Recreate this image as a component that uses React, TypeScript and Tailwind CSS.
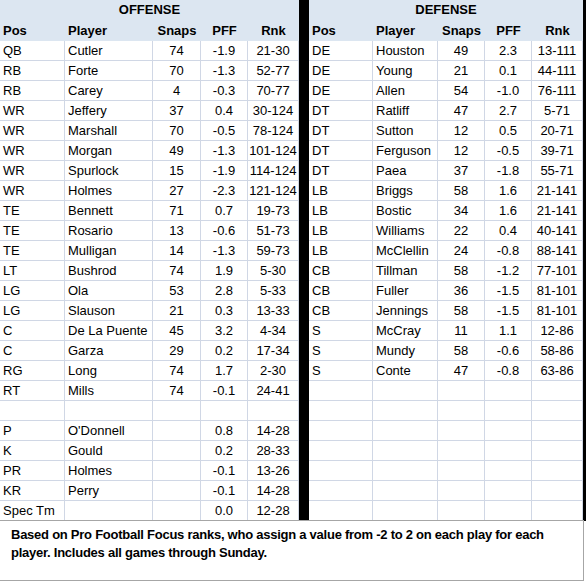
type Row = [string, string, string, string, string];

const offense: Row[] = [
  ["QB", "Cutler", "74", "-1.9", "21-30"],
  ["RB", "Forte", "70", "-1.3", "52-77"],
  ["RB", "Carey", "4", "-0.3", "70-77"],
  ["WR", "Jeffery", "37", "0.4", "30-124"],
  ["WR", "Marshall", "70", "-0.5", "78-124"],
  ["WR", "Morgan", "49", "-1.3", "101-124"],
  ["WR", "Spurlock", "15", "-1.9", "114-124"],
  ["WR", "Holmes", "27", "-2.3", "121-124"],
  ["TE", "Bennett", "71", "0.7", "19-73"],
  ["TE", "Rosario", "13", "-0.6", "51-73"],
  ["TE", "Mulligan", "14", "-1.3", "59-73"],
  ["LT", "Bushrod", "74", "1.9", "5-30"],
  ["LG", "Ola", "53", "2.8", "5-33"],
  ["LG", "Slauson", "21", "0.3", "13-33"],
  ["C", "De La Puente", "45", "3.2", "4-34"],
  ["C", "Garza", "29", "0.2", "17-34"],
  ["RG", "Long", "74", "1.7", "2-30"],
  ["RT", "Mills", "74", "-0.1", "24-41"],
  ["", "", "", "", ""],
  ["P", "O'Donnell", "", "0.8", "14-28"],
  ["K", "Gould", "", "0.2", "28-33"],
  ["PR", "Holmes", "", "-0.1", "13-26"],
  ["KR", "Perry", "", "-0.1", "14-28"],
  ["Spec Tm", "", "", "0.0", "12-28"],
];

const defense: Row[] = [
  ["DE", "Houston", "49", "2.3", "13-111"],
  ["DE", "Young", "21", "0.1", "44-111"],
  ["DE", "Allen", "54", "-1.0", "76-111"],
  ["DT", "Ratliff", "47", "2.7", "5-71"],
  ["DT", "Sutton", "12", "0.5", "20-71"],
  ["DT", "Ferguson", "12", "-0.5", "39-71"],
  ["DT", "Paea", "37", "-1.8", "55-71"],
  ["LB", "Briggs", "58", "1.6", "21-141"],
  ["LB", "Bostic", "34", "1.6", "21-141"],
  ["LB", "Williams", "22", "0.4", "40-141"],
  ["LB", "McClellin", "24", "-0.8", "88-141"],
  ["CB", "Tillman", "58", "-1.2", "77-101"],
  ["CB", "Fuller", "36", "-1.5", "81-101"],
  ["CB", "Jennings", "58", "-1.5", "81-101"],
  ["S", "McCray", "11", "1.1", "12-86"],
  ["S", "Mundy", "58", "-0.6", "58-86"],
  ["S", "Conte", "47", "-0.8", "63-86"],
];

// pad defense out to the same number of rows as offense
while (defense.length < offense.length) defense.push(["", "", "", "", ""]);

const Section = ({
  title,
  rows,
  widths,
}: {
  title: string;
  rows: Row[];
  widths: string[];
}) => {
  const align = ["justify-start pl-[3px]", "justify-start pl-[3px]", "justify-center", "justify-center", "justify-center"];
  const labels = ["Pos", "Player", "Snaps", "PFF", "Rnk"];

  return (
    <div className="flex flex-col">
      <div className="h-[41px] bg-[#dce6f1] flex flex-col font-bold">
        <div className="h-5 leading-[20px] text-center">{title}</div>
        <div className="h-[21px] flex leading-[21px]">
          {labels.map((l, i) => (
            <div key={l} className={`${widths[i]} flex ${align[i]}`}>
              {l}
            </div>
          ))}
        </div>
      </div>
      {rows.map((r, ri) => (
        <div key={ri} className="flex h-5">
          {r.map((c, ci) => (
            <div
              key={ci}
              className={`${widths[ci]} h-5 flex ${align[ci]} border-b border-r border-[#d0d7e5] leading-[20px] whitespace-nowrap`}
            >
              {c}
            </div>
          ))}
        </div>
      ))}
    </div>
  );
};

const App = () => {
  return (
    <div className="w-[586px] h-[582px] bg-white text-black text-[13px] font-['Liberation_Sans',Arial,sans-serif] overflow-hidden">
      <div className="flex">
        <Section
          title="OFFENSE"
          rows={offense}
          widths={["w-[65px]", "w-[88px]", "w-[48px]", "w-[47px]", "w-[51px]"]}
        />
        <div className="w-[10px] bg-black" />
        <Section
          title="DEFENSE"
          rows={defense}
          widths={["w-[64px]", "w-[65px]", "w-[47px]", "w-[47px]", "w-[51px]"]}
        />
        <div className="w-[3px] bg-black" />
      </div>
      <div className="relative -mt-px w-[584px] h-[61px] bg-white border-t border-r border-b border-[#a6a6a6] pl-[11px] pt-[5px] font-bold leading-[18px] tracking-[-0.25px]">
        Based on Pro Football Focus ranks, who assign a value from -2 to 2 on each play for each
        <br />
        player. Includes all games through Sunday.
      </div>
    </div>
  );
};

export default App;
